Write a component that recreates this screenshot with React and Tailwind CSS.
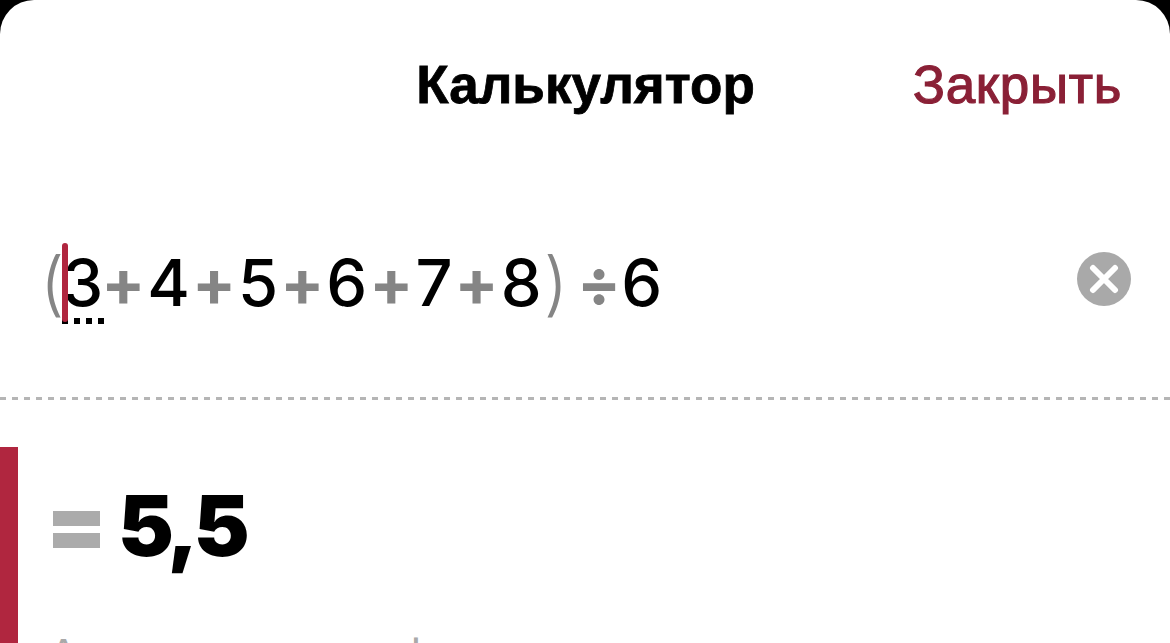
const Digit = ({ className = "", children }) => <span className={`font-medium text-black ${className}`}>{children}</span>;
const Plus = () => <span className="mx-[2px] text-[#858585] font-bold">+</span>;

export default function App() {
  return (
    <div className="h-[643px] w-[1170px] overflow-hidden bg-black font-['Liberation_Sans',Arial,sans-serif]">
      <div className="flex h-full flex-col rounded-t-[34px] bg-white">
        <header className="relative flex h-[170px] shrink-0 justify-center pt-[54px]">
          <h1 className="ml-[1px] text-[53px] leading-[61px] font-bold text-black [-webkit-text-stroke:0.8px_black]">Калькулятор</h1>
          <button className="absolute top-[54px] right-[48px] text-[53px] leading-[61px] tracking-[0.7px] text-[#8a2036] [-webkit-text-stroke:1.2px_#8a2036]">Закрыть</button>
        </header>

        <section className="flex h-[227px] shrink-0 items-center justify-between pt-[1px] pr-[39px] pl-[40px]">
          <div className="relative mb-[3px] flex items-center font-['Inter',sans-serif] text-[65px] leading-[80px] text-black">
            <span className="mr-[-2px] text-[70px] font-light text-[#858585]">(</span>
            <Digit className="mr-[-4px]">3</Digit>
            <Plus />
            <Digit>4</Digit>
            <Plus />
            <Digit>5</Digit>
            <Plus />
            <Digit>6</Digit>
            <Plus />
            <Digit>7</Digit>
            <Plus />
            <Digit>8</Digit>
            <span className="ml-[2px] text-[70px] font-light text-[#858585]">)</span>
            <span className="ml-[9px] font-bold text-[#858585]">÷</span>
            <Digit>6</Digit>
            <span className="absolute top-0 left-[22px] z-10 h-[79px] w-[6px] rounded-full bg-[#b0263f]" />
            <span className="absolute top-[75px] left-[22px] flex gap-[6px]">
              <i className="size-[6px] bg-black" />
              <i className="size-[6px] bg-black" />
              <i className="size-[6px] bg-black" />
              <i className="size-[6px] bg-black" />
            </span>
          </div>
          <button className="mb-[10px] flex size-[54px] items-center justify-center rounded-full bg-[#a9a9a9]">
            <svg width="30" height="30" viewBox="0 0 30 30" fill="none">
              <path d="M4 4L26 26M26 4L4 26" stroke="white" strokeWidth="6" strokeLinecap="round" />
            </svg>
          </button>
        </section>

        <div className="h-[3px] shrink-0 bg-[repeating-linear-gradient(90deg,#b5b5b5_0_6px,transparent_6px_12px)]" />

        <section className="mt-[47px] flex min-h-0 flex-1 border-l-[18px] border-[#b0263f] pl-[35px]">
          <div className="flex flex-col">
            <div className="mt-[40px] flex h-[78px] items-center gap-[18px]">
              <span className="mt-[7px] flex flex-col gap-[7px]">
                <i className="h-[15px] w-[47px] bg-[#ababab]" />
                <i className="h-[15px] w-[47px] bg-[#ababab]" />
              </span>
              <span className="font-['Inter',sans-serif] text-[84px] leading-[78px] font-black tracking-[-5px] text-black">5,5</span>
            </div>
            <p className="mt-[64px] -ml-[5px] text-[46px] leading-[53px] tracking-[-0.7px] whitespace-nowrap text-[#a9a9a9]">Альтернативная форма</p>
          </div>
        </section>
      </div>
    </div>
  );
}
